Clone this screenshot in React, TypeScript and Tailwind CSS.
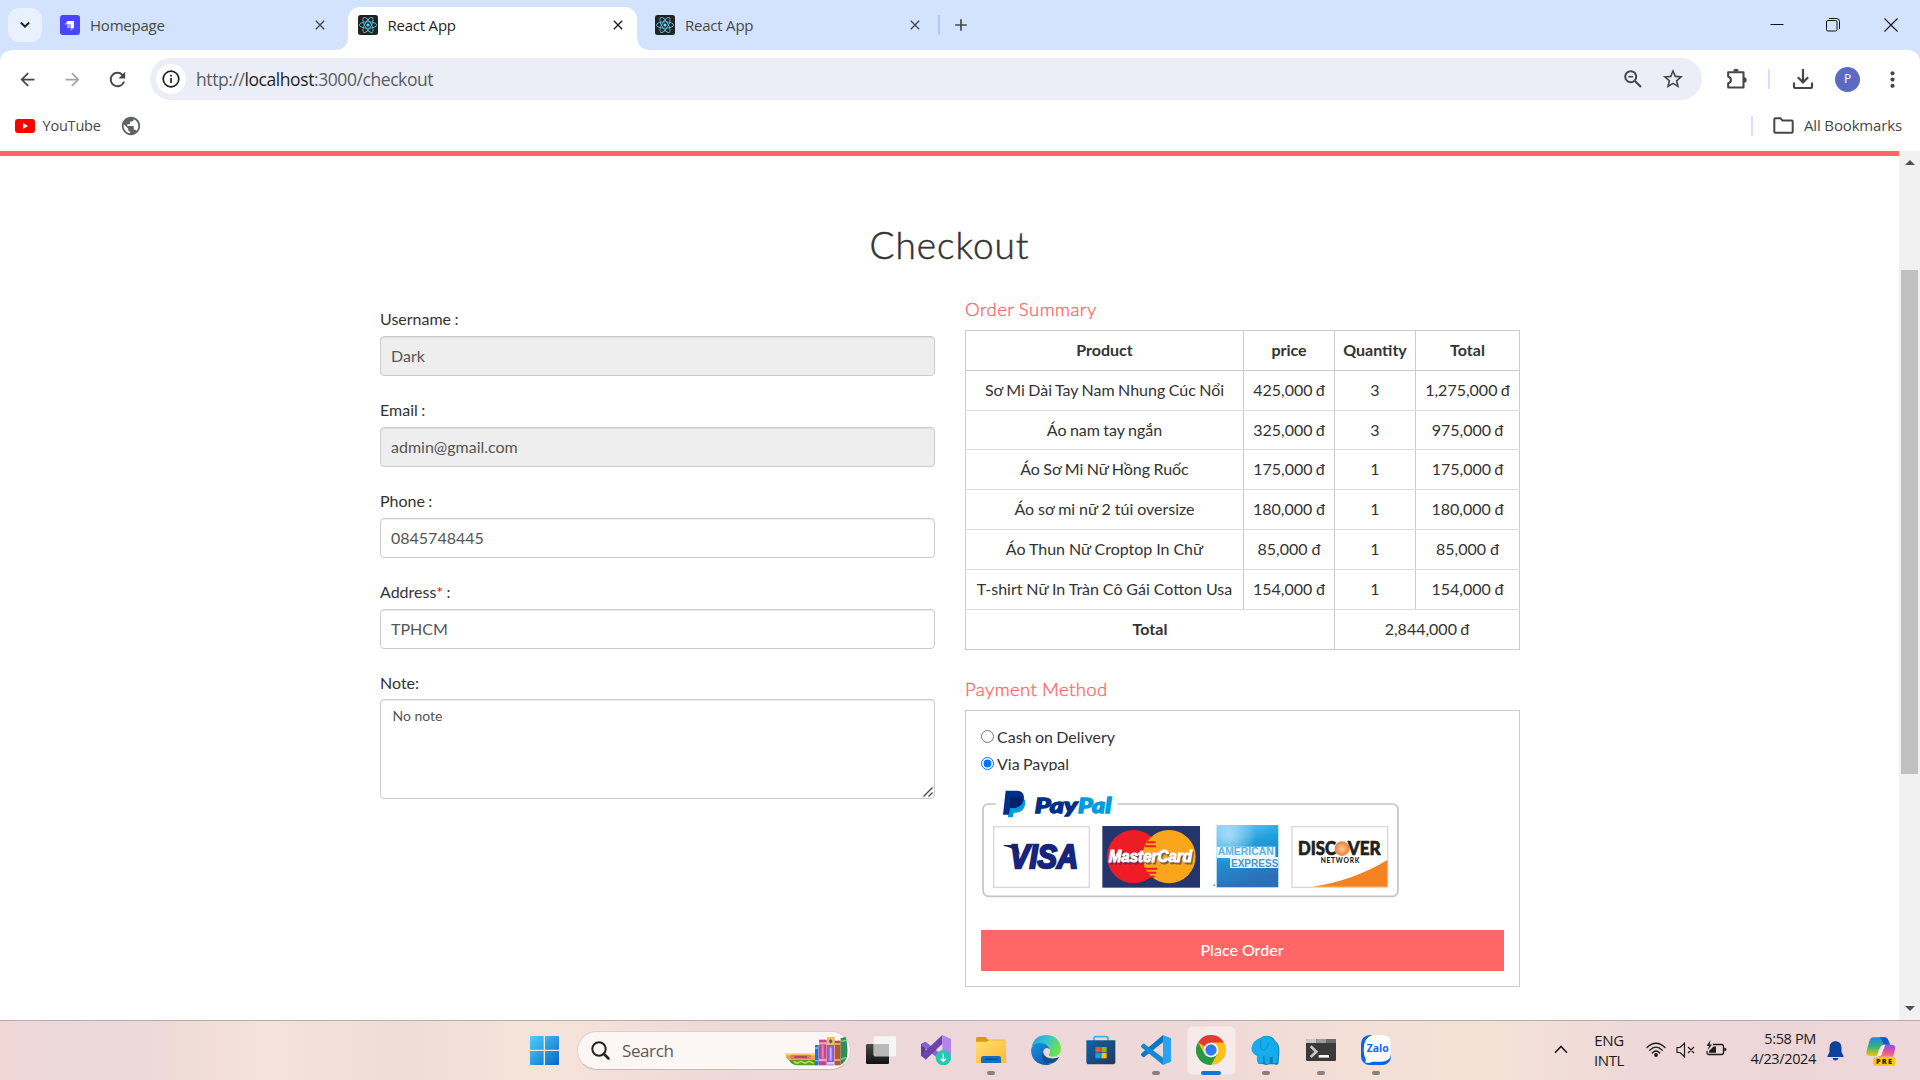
import React from "react";
import {
  MdArrowBack,
  MdArrowForward,
  MdRefresh,
  MdStarBorder,
  MdClose,
  MdAdd,
  MdPublic,
  MdMoreVert,
} from "react-icons/md";

const ui = "font-['Open_Sans','Noto_Sans',sans-serif]";
const body = "font-['Lato',sans-serif]";

const ReactLogo = () => (
  <svg className="h-5 w-5" viewBox="0 0 20 20">
    <rect width="20" height="20" rx="2.5" fill="#222" />
    <g fill="none" stroke="#61dafb" strokeWidth="0.9" opacity="0.85">
      <ellipse cx="10" cy="10" rx="8.6" ry="3.2" />
      <ellipse cx="10" cy="10" rx="8.6" ry="3.2" transform="rotate(60 10 10)" />
      <ellipse cx="10" cy="10" rx="8.6" ry="3.2" transform="rotate(120 10 10)" />
    </g>
    <circle cx="10" cy="10" r="1.6" fill="#61dafb" />
  </svg>
);

const StrapiLogo = () => (
  <svg className="h-5 w-5" viewBox="0 0 20 20">
    <rect width="20" height="20" rx="3" fill="#4945ff" />
    <path d="M7 6h6.500q.5 0 .5.5V13h-3.400V9.400H7z" fill="#fff" />
    <path d="M7 6v3.400H4.200z M10.600 13H14l-3.400 3z M7 9.400h3.600V13H7.500q-.5 0-.5-.5z" fill="#a5a2ff" />
  </svg>
);

function Tab({ icon, title, active }: { icon: React.ReactNode; title: string; active?: boolean }) {
  return (
    <div
      className={
        active
          ? "relative mt-[7px] flex h-[43px] w-[289px] items-start rounded-t-[12px] bg-white pt-2 pl-[10px]"
          : "relative mt-[7px] flex h-[43px] w-[289px] items-start pt-2 pl-[10px]"
      }
    >
      {active && (
        <>
          <svg className="absolute bottom-0 -left-[14px] h-[14px] w-[14px]" viewBox="0 0 14 14">
            <path d="M14 0v14H0Q14 14 14 0z" fill="#fff" />
          </svg>
          <svg className="absolute -right-[14px] bottom-0 h-[14px] w-[14px]" viewBox="0 0 14 14">
            <path d="M0 0v14h14Q0 14 0 0z" fill="#fff" />
          </svg>
        </>
      )}
      {icon}
      <span
        className={
          active
            ? "ml-[9.5px] text-[15px] leading-5 tracking-[-0.22px] text-[#1f1f1f]"
            : "ml-[10px] text-[15px] leading-5 tracking-[-0.22px] text-[#474747]"
        }
      >
        {title}
      </span>
      <MdClose className={active ? "mt-[2px] mr-[11px] ml-auto h-4 w-4 text-[#1f1f1f]" : "mt-[2px] mr-[11px] ml-auto h-4 w-4 text-[#474747]"} />
    </div>
  );
}

function TabStrip() {
  return (
    <div className="flex h-[50px] shrink-0 bg-[#d3e3fd]">
      <div className="mt-2 ml-2 flex h-[34px] w-[34px] items-center justify-center rounded-[11px] bg-[#e9f0fe]">
        <svg className="h-3 w-3" viewBox="0 0 12 12">
          <path d="M1.800 3.500L6 7.700l4.200-4.200" fill="none" stroke="#1f1f1f" strokeWidth="2" />
        </svg>
      </div>
      <div className="ml-2 flex">
        <Tab icon={<StrapiLogo />} title="Homepage" />
        <div className="w-[9px]" />
        <Tab icon={<ReactLogo />} title="React App" active />
        <div className="w-2" />
        <Tab icon={<ReactLogo />} title="React App" />
      </div>
      <div className="mt-[15px] ml-[4px] h-5 w-[2px] rounded bg-[#a8c7fa]" />
      <MdAdd className="mt-[15px] ml-[11px] h-5 w-5 text-[#474747]" />
      <div className="mt-[18px] ml-auto flex h-[14px] items-center">
        <svg className="mr-[42px] h-[14px] w-[14px]" viewBox="0 0 14 14">
          <path d="M0.500 6.500h13" stroke="#111" strokeWidth="1" />
        </svg>
        <svg className="mr-[44px] h-[14px] w-[14px]" viewBox="0 0 14 14">
          <rect x="0.500" y="2.500" width="10.500" height="10.500" rx="1.500" fill="none" stroke="#111" />
          <path d="M3 0.500h7.500q3 0 3 3V11" fill="none" stroke="#111" />
        </svg>
        <svg className="mr-[22px] h-[14px] w-[14px]" viewBox="0 0 14 14">
          <path d="M0.500 0.500l13 13M13.500 0.500l-13 13" stroke="#111" strokeWidth="1.100" />
        </svg>
      </div>
    </div>
  );
}

function Toolbar() {
  return (
    <div className="bg-[#d3e3fd]">
      <div className="flex h-[58px] items-center rounded-t-[12px] bg-white text-[#474747]">
        <MdArrowBack className="ml-[17px] h-[21px] w-[21px]" />
        <MdArrowForward className="ml-[24px] h-[21px] w-[21px] text-[#a6a6a6]" />
        <MdRefresh className="ml-[23px] h-[23px] w-[23px]" />
        <div className="ml-[21px] flex h-[42px] w-[1552px] items-center rounded-full bg-[#ebeef7]">
          <div className="ml-[6px] flex h-[30px] w-[30px] items-center justify-center rounded-full bg-white">
            <svg className="h-[18px] w-[18px]" viewBox="0 0 18 18">
              <circle cx="9" cy="9" r="7.800" fill="none" stroke="#1f1f1f" strokeWidth="1.700" />
              <path d="M9 8v5" stroke="#1f1f1f" strokeWidth="1.700" />
              <path d="M9 4.800v1.800" stroke="#1f1f1f" strokeWidth="1.700" />
            </svg>
          </div>
          <span className="ml-[10px] pt-[1px] text-[17.5px] tracking-[-0.42px] text-[#5a5d63]">
            http://<span className="text-[#1f1f1f]">localhost</span>:3000/checkout
          </span>
          <svg className="ml-auto h-[20px] w-[20px]" viewBox="0 0 20 20">
            <circle cx="7.700" cy="7.700" r="5.500" fill="none" stroke="#474747" strokeWidth="2" />
            <path d="M12 12l6 6" stroke="#474747" strokeWidth="2.200" />
            <path d="M5.300 7.700h4.800" stroke="#474747" strokeWidth="1.600" />
          </svg>
          <MdStarBorder className="mr-[17px] ml-[18px] h-6 w-6" />
        </div>
        <svg className="ml-[24px] h-[22px] w-[22px]" viewBox="0 0 22 22">
          <path
            d="M2.200 4.200H17.500V19.500H2.200V15.300Q4.900 14.400 4.900 11.900T2.200 8.500z"
            fill="none"
            stroke="#474747"
            strokeWidth="2.100"
            strokeLinejoin="round"
          />
          <path d="M7.300 3.500a2.700 2.700 0 0 1 5.400 0zM18 9.200a2.700 2.700 0 0 1 0 5.400z" fill="#474747" />
        </svg>
        <div className="ml-[20px] h-5 w-[2px] bg-[#d3e3fd]" />
        <svg className="ml-[22px] h-[22px] w-[22px]" viewBox="0 0 22 22">
          <path d="M11 1v13M5.800 9.200L11 14.400l5.200-5.200M2 14.500V19q0 1 1 1h16q1 0 1-1v-4.500" fill="none" stroke="#474747" strokeWidth="2.200" />
        </svg>
        <div className="ml-[21px] flex h-[25px] w-[25px] items-center justify-center rounded-full bg-[#5c6bc0] text-[12px] text-white">P</div>
        <MdMoreVert className="ml-[20px] h-[25px] w-[25px]" />
      </div>
      <div className="flex h-[43px] items-start bg-white pt-2 text-[#474747]">
        <svg className="mt-[3px] ml-[15px] h-[14px] w-5" viewBox="0 0 20 14">
          <rect width="20" height="14" rx="3" fill="#f00" />
          <path d="M8 4l5 3-5 3z" fill="#fff" />
        </svg>
        <span className="ml-[7.500px] w-[58.500px] text-[14.5px] leading-5 tracking-[-0.2px]">YouTube</span>
        <MdPublic className="-mt-px ml-[19px] h-[22px] w-[22px] text-[#5f6368]" />
        <div className="ml-auto h-5 w-[2px] bg-[#d3e3fd]" />
        <svg className="mt-[1px] ml-[20px] h-[18px] w-[21px]" viewBox="0 0 21 18">
          <path d="M1.300 2.300Q1.300 1.300 2.300 1.300H7.500L9.500 3.600H18.700Q19.700 3.600 19.700 4.600V14.700Q19.700 15.700 18.700 15.700H2.300Q1.300 15.700 1.300 14.700z" fill="none" stroke="#474747" strokeWidth="2" />
        </svg>
        <span className="-mt-px mr-[18px] ml-[10px] text-[15px] leading-5 tracking-[-0.15px]">All Bookmarks</span>
      </div>
    </div>
  );
}

function Field({ label, value, disabled, required }: { label: string; value: string; disabled?: boolean; required?: boolean }) {
  return (
    <div className="h-[91px]">
      <label className="block h-[31px] pt-[3px] text-[16px] leading-[22px]">
        {label}
        {required && <span className="text-[#f00]">*</span>} :
      </label>
      <input
        readOnly
        value={value}
        className={
          disabled
            ? "block h-10 w-full rounded-[4px] border border-[#ccc] bg-[#eee] px-[10px] pb-[1px] text-[16px] text-[#555] shadow-[inset_0_1px_1px_rgba(0,0,0,0.075)]"
            : "block h-10 w-full rounded-[4px] border border-[#ccc] bg-white px-[10px] pb-[1px] text-[16px] text-[#555] shadow-[inset_0_1px_1px_rgba(0,0,0,0.075)]"
        }
      />
    </div>
  );
}

const rows = [
  ["Sơ Mi Dài Tay Nam Nhung Cúc Nổi", "425,000 đ", "3", "1,275,000 đ"],
  ["Áo nam tay ngắn", "325,000 đ", "3", "975,000 đ"],
  ["Áo Sơ Mi Nữ Hồng Ruốc", "175,000 đ", "1", "175,000 đ"],
  ["Áo sơ mi nữ 2 túi oversize", "180,000 đ", "1", "180,000 đ"],
  ["Áo Thun Nữ Croptop In Chữ", "85,000 đ", "1", "85,000 đ"],
  ["T-shirt Nữ In Tràn Cô Gái Cotton Usa", "154,000 đ", "1", "154,000 đ"],
];

function OrderTable() {
  return (
    <table className="w-[554px] table-fixed border-collapse border border-[#ccc] text-center text-[16px] whitespace-nowrap">
      <colgroup>
        <col className="w-[278px]" />
        <col className="w-[91px]" />
        <col className="w-[81px]" />
        <col className="w-[104px]" />
      </colgroup>
      <tbody>
        <tr className="h-10">
          {["Product", "price", "Quantity", "Total"].map((h) => (
            <th key={h} className="border border-[#ccc] p-0 pb-[2px] font-bold">
              {h}
            </th>
          ))}
        </tr>
        {rows.map((r, i) => (
          <tr key={r[0]} className={i === 1 ? "h-[39px]" : i >= 3 ? "h-10 [word-spacing:-0.2px]" : "h-10"}>
            {r.map((c, j) => (
              <td key={j} className={i === 1 ? "border-x border-b border-x-[#ccc] border-b-[#ddd] p-0 pb-px" : "border-x border-b border-x-[#ccc] border-b-[#ddd] p-0 pb-[2px]"}>
                {c}
              </td>
            ))}
          </tr>
        ))}
        <tr className="h-10">
          <td colSpan={2} className="border border-[#ccc] p-0 pb-[2px] font-bold">
            Total
          </td>
          <td colSpan={2} className="border border-[#ccc] p-0 pb-[2px]">
            2,844,000 đ
          </td>
        </tr>
      </tbody>
    </table>
  );
}

const PaymentCards = () => (
  <svg className="-ml-[11px] block h-[130px] w-[440px]" viewBox="0 0 1320 390">
    <defs>
      <linearGradient id="amex" x1="0" y1="0" x2="0.300" y2="1">
        <stop offset="0" stopColor="#7fcaf2" />
        <stop offset="0.400" stopColor="#1fa0dc" />
        <stop offset="1" stopColor="#2a6fb8" />
      </linearGradient>
      <radialGradient id="amexGlow" cx="0.200" cy="0.150" r="0.450">
        <stop offset="0" stopColor="#a9dbf8" />
        <stop offset="1" stopColor="#a9dbf8" stopOpacity="0" />
      </radialGradient>
      <radialGradient id="disc">
        <stop offset="0" stopColor="#fcc9a0" />
        <stop offset="1" stopColor="#f07f2b" />
      </radialGradient>
    </defs>
    <path d="M77 72H56Q39 72 39 89V330Q39 349 58 349H1266Q1284 349 1284 330V89Q1284 72 1267 72H442" fill="none" stroke="#c4c4c4" strokeWidth="5" />
    <path d="M118 50H150Q170 54 165 76Q160 98 136 98H132L128 112H114z" fill="#009cde" />
    <path d="M107 32H142Q166 34 161 60Q156 84 128 84H121L116 104H99z" fill="#003087" />
    <path d="M121 52H158Q155 84 126 84H116z" fill="#012169" />
    <text x="194" y="99" fontFamily="Lato" fontWeight="900" fontStyle="italic" fontSize="64" textLength="128" lengthAdjust="spacingAndGlyphs" fill="#003087" stroke="#003087" strokeWidth="4">Pay</text>
    <text x="324" y="99" fontFamily="Lato" fontWeight="900" fontStyle="italic" fontSize="64" textLength="100" lengthAdjust="spacingAndGlyphs" fill="#009cde" stroke="#009cde" strokeWidth="4">Pal</text>

    <rect x="71" y="140" width="287" height="182" fill="#fff" stroke="#d9d9d9" strokeWidth="4" />
    <text x="120" y="265" fontFamily="Liberation Sans" fontWeight="700" fontStyle="italic" fontSize="98" textLength="204" lengthAdjust="spacingAndGlyphs" fill="#15267c" stroke="#15267c" strokeWidth="7">VISA</text>
    <path d="M101 195H142L150 224Q128 202 101 198z" fill="#1a1f5c" />

    <rect x="397" y="138" width="293" height="185" fill="#24346c" />
    <circle cx="491" cy="230" r="80" fill="#ee1c25" />
    <circle cx="597" cy="230" r="80" fill="#faa61a" />
    <path d="M530 187H556M524 199H558M524 266H562M524 278H558M530 290H554" stroke="#ee1c25" strokeWidth="6" />
    <text x="420" y="251" fontFamily="Liberation Sans" fontWeight="700" fontStyle="italic" fontSize="52" textLength="250" lengthAdjust="spacingAndGlyphs" fill="#24346c" stroke="#24346c" strokeWidth="3" opacity="0.6">MasterCard</text>
    <text x="416" y="247" fontFamily="Liberation Sans" fontWeight="700" fontStyle="italic" fontSize="52" textLength="250" lengthAdjust="spacingAndGlyphs" fill="#fff" stroke="#fff" strokeWidth="3">MasterCard</text>

    <rect x="740" y="135" width="185" height="187" fill="url(#amex)" />
    <rect x="740" y="135" width="185" height="187" fill="url(#amexGlow)" />
    <path d="M740 200H916V231H925V264H780V234H740z" fill="#eaf6fd" />
    <text x="743" y="226" fontFamily="Liberation Sans" fontWeight="700" fontSize="30" textLength="168" lengthAdjust="spacingAndGlyphs" fill="#5fb4e3">AMERICAN</text>
    <text x="783" y="261" fontFamily="Liberation Sans" fontWeight="700" fontSize="30" textLength="142" lengthAdjust="spacingAndGlyphs" fill="#4a96d0">EXPRESS</text>
    <circle cx="733" cy="316" r="3" fill="#5fa8d8" />

    <rect x="966" y="140" width="287" height="182" fill="#fff" stroke="#d9d9d9" strokeWidth="4" />
    <path d="M1028 320Q1150 302 1252 240V320z" fill="#f58220" />
    <text x="984" y="226" fontFamily="Lato" fontWeight="900" fontSize="58" textLength="114" lengthAdjust="spacingAndGlyphs" fill="#231f20" stroke="#231f20" strokeWidth="2">DISC</text>
    <circle cx="1116" cy="206" r="22" fill="url(#disc)" />
    <text x="1133" y="226" fontFamily="Lato" fontWeight="900" fontSize="58" textLength="99" lengthAdjust="spacingAndGlyphs" fill="#231f20" stroke="#231f20" strokeWidth="2">VER</text>
    <text x="1052" y="250" fontFamily="Lato" fontWeight="900" fontSize="20" textLength="116" fill="#231f20">NETWORK</text>
  </svg>
);

function Checkout() {
  return (
    <div className="flex min-h-0 flex-1">
      <main className={`${body} flex-1 overflow-hidden border-t-[5px] border-[#f66] bg-white text-[#333] [word-spacing:-0.7px]`}>
        <h1 className="mt-[61px] h-[56px] text-center text-[37px] leading-[55px] font-light tracking-[0.95px] [-webkit-text-stroke:0.5px_#333]">Checkout</h1>
        <div className="ml-[380px] flex w-[1140px] justify-between">
          <form className="mt-[32px] w-[555px]">
            <Field label="Username" value="Dark" disabled />
            <Field label="Email" value="admin@gmail.com" disabled />
            <Field label="Phone" value="0845748445" />
            <Field label="Address" value="TPHCM" required />
            <label className="block h-[30px] pt-[3px] text-[16px] leading-[22px]">Note:</label>
            <div className="relative h-[100px]">
              <textarea
                readOnly
                value="No note"
                className="block h-[100px] w-full resize-none rounded-[4px] border border-[#ccc] px-[11.5px] py-[6px] text-[14px] leading-5 text-[#555] shadow-[inset_0_1px_1px_rgba(0,0,0,0.075)]"
              />
              <svg className="absolute right-[2px] bottom-[2px] h-[10px] w-[10px]" viewBox="0 0 10 10">
                <path d="M0.500 9.500l9-9M5.500 9.500l4-4" stroke="#444" strokeWidth="1.300" />
              </svg>
            </div>
          </form>
          <section className="mt-[24px] w-[555px]">
            <h2 className="-mt-[1px] h-[34px] text-[18.5px] leading-[27px] font-light tracking-[0.5px] text-[#f66] [-webkit-text-stroke:0.35px_#f66]">Order Summary</h2>
            <OrderTable />
            <h2 className="mt-[26px] h-[34px] text-[18.5px] leading-[27px] font-light tracking-[0.42px] text-[#f66] [-webkit-text-stroke:0.35px_#f66]">Payment Method</h2>
            <div className="h-[277px] border border-[#ccc] px-[15px]">
              <label className="mt-[12px] flex h-[27px] items-center text-[16px]">
                <input type="radio" name="pay" readOnly className="mr-[3px] h-[13px] w-[13px]" />
                Cash on Delivery
              </label>
              <label className="mt-[2px] flex h-[19px] items-start overflow-hidden text-[16px] leading-[24px]">
                <input type="radio" name="pay" readOnly checked className="mt-[5px] mr-[3px] h-[13px] w-[13px]" />
                Via Paypal
              </label>
              <div className="mt-[9px] h-[150px]">
                <PaymentCards />
              </div>
              <button className="block h-[41px] w-full bg-[#f66] pr-px pb-[2px] text-[16px] font-medium text-white">Place Order</button>
            </div>
          </section>
        </div>
      </main>
      <div className="flex w-[21px] flex-col items-center bg-[#f1f1f1]">
        <svg className="mt-[9px] h-[5px] w-[10px]" viewBox="0 0 10 5">
          <path d="M0 5L5 0l5 5z" fill="#505050" />
        </svg>
        <div className="mt-[105px] h-[504px] w-[17px] bg-[#c1c1c1]" />
        <svg className="mt-auto mb-[9px] h-[5px] w-[10px]" viewBox="0 0 10 5">
          <path d="M0 0l5 5 5-5z" fill="#505050" />
        </svg>
      </div>
    </div>
  );
}

function TaskIcon({ children, state }: { children: React.ReactNode; state?: "open" | "active" }) {
  return (
    <div className="relative flex h-[60px] w-[55px] items-center justify-center">
      {state === "active" && <div className="absolute top-[5px] left-[3px] h-[49px] w-[49px] rounded-[5px] border border-[#f0e4e4] bg-[#f7eaea]" />}
      <svg className="relative -mt-[3px] h-[30px] w-[30px]" viewBox="0 0 90 90">
        {children}
      </svg>
      {state === "open" && <div className="absolute bottom-[6px] left-[23px] h-1 w-2 rounded-full bg-[#8a8080]" />}
      {state === "active" && <div className="absolute bottom-[6px] left-[17px] h-1 w-5 rounded-full bg-[#0a78d4]" />}
    </div>
  );
}

function Taskbar() {
  return (
    <div
      className={`${ui} flex h-[60px] shrink-0 border-t border-[#b9abab] bg-[linear-gradient(90deg,#f0d7d6_0%,#ecd8d9_3%,#eed9d9_8%,#f1ddd7_10%,#f5e3da_14%,#f0dcd7_21%,#f5e3d9_27%,#f4e1d9_31%,#f0dad8_36%,#edd7d9_45%,#efd8d8_62%,#f3dfd6_70%,#f4e2d7_78%,#efd9d8_85%,#ecd6d8_93%,#efd8d8_100%)]`}
    >
      <svg className="mt-[15px] ml-[530px] h-[29px] w-[29px]" viewBox="0 0 87 87">
        <defs>
          <linearGradient id="win" x1="0" y1="0" x2="1" y2="1">
            <stop offset="0" stopColor="#4fd0fb" />
            <stop offset="1" stopColor="#0568c8" />
          </linearGradient>
        </defs>
        <path d="M3 0H41V41H0V3Q0 0 3 0zM45 0H84Q87 0 87 3V41H45zM0 45H41V87H3Q0 87 0 84zM45 45H87V84Q87 87 84 87H45z" fill="url(#win)" />
      </svg>
      <div className="mt-[10px] ml-[18px] flex h-[39px] w-[274px] items-center rounded-full border border-[#e2cfcb] border-b-[#c9b9b6] bg-[#fcf7f5]">
        <svg className="ml-[13px] h-[19px] w-[19px]" viewBox="0 0 19 19">
          <circle cx="8" cy="8" r="6.700" fill="none" stroke="#222" strokeWidth="2" />
          <path d="M13 13l4.500 4.500" stroke="#222" strokeWidth="2.500" strokeLinecap="round" />
        </svg>
        <span className="ml-[12px] text-[17px] tracking-[-0.4px] text-[#5d5856]">Search</span>
        <svg className="mr-[2px] ml-auto h-[30px] w-[63px]" viewBox="0 0 189 90">
          <path d="M2 53H92V72H12Q2 70 2 53z" fill="#e9a93c" />
          <rect x="2" y="53" width="90" height="5" fill="#f5d36b" />
          <rect x="16" y="56" width="62" height="13" rx="5" fill="#e8727a" />
          <rect x="28" y="60" width="38" height="6" fill="#a95058" />
          <path d="M12 72H92V88H36Q18 86 12 72z" fill="#5a9e22" />
          <path d="M26 76l10 6 12-6 12 6 12-6 14 6" fill="none" stroke="#b8e04e" strokeWidth="5" />
          <rect x="90" y="27" width="11" height="61" fill="#2f6fdb" />
          <path d="M90 36h11M90 74h11" stroke="#82b4ff" strokeWidth="4" />
          <rect x="102" y="11" width="23" height="77" fill="#c4498c" />
          <path d="M102 22h23M102 72h23" stroke="#f3a0c4" strokeWidth="7" />
          <path d="M113 28v38" stroke="#e884b4" strokeWidth="6" />
          <rect x="126" y="3" width="22" height="85" fill="#8a62cf" />
          <rect x="126" y="3" width="22" height="24" fill="#f0c341" />
          <path d="M137 9l6 7-6 7-6-7z" fill="#6d43b4" />
          <path d="M137 34v40" stroke="#c9b2f2" strokeWidth="6" />
          <rect x="126" y="78" width="22" height="8" fill="#d9c7f5" />
          <rect x="149" y="14" width="18" height="74" fill="#b1592c" />
          <path d="M149 24h18M149 72h18" stroke="#e9a25d" strokeWidth="6" />
          <path d="M167 6L182 3Q190 30 186 62Q180 80 167 86z" fill="#2f8f55" />
          <path d="M168 16l16-3M168 70l15-6" stroke="#7fd19a" strokeWidth="4" />
        </svg>
      </div>
      <div className="ml-[2.5px] flex">
        <TaskIcon>
          <defs>
            <linearGradient id="tv" x1="0" y1="0" x2="0" y2="1">
              <stop offset="0" stopColor="#4a4a48" />
              <stop offset="1" stopColor="#111" />
            </linearGradient>
          </defs>
          <rect x="0" y="27" width="69" height="60" rx="4" fill="url(#tv)" />
          <rect x="23" y="4" width="67" height="60" rx="4" fill="#f6f6f6" />
          <path d="M23 27H69V64H27Q23 64 23 60z" fill="#b9b9b9" />
        </TaskIcon>
        <TaskIcon>
          <path d="M0 27L14 20V70L0 63z" fill="#5b3f98" />
          <path d="M14 20L66 62V82L0 30z" fill="#8b62cc" />
          <path d="M0 60L64 0V26L14 74z" fill="#6a45ad" />
          <path d="M64 0L90 12V74L64 84z" fill="#b583f0" />
          <circle cx="67" cy="68" r="23" fill="#24c8b4" />
          <path d="M67 56v22M59 71l8 8 8-8" fill="none" stroke="#fff" strokeWidth="4" />
        </TaskIcon>
        <TaskIcon state="open">
          <defs>
            <linearGradient id="fold" x1="0" y1="0" x2="1" y2="1">
              <stop offset="0" stopColor="#ffdf77" />
              <stop offset="1" stopColor="#fdba2c" />
            </linearGradient>
          </defs>
          <path d="M0 10Q0 6 4 6H28Q32 6 36 14H86Q90 14 90 18V40H0z" fill="#dd9a0a" />
          <path d="M0 20H32L40 16H90V84H0z" fill="url(#fold)" />
          <path d="M15 84V70Q15 63 22 63H68Q75 63 75 70V84z" fill="#1170c4" />
          <path d="M27 73H64" stroke="#0a4a88" strokeWidth="4" />
        </TaskIcon>
        <TaskIcon>
          <defs>
            <linearGradient id="eg1" x1="0" y1="0" x2="1" y2="0.400">
              <stop offset="0" stopColor="#1c9de0" />
              <stop offset="0.500" stopColor="#35c3d0" />
              <stop offset="1" stopColor="#6ee04e" />
            </linearGradient>
            <linearGradient id="eg2" x1="0" y1="0" x2="0.600" y2="1">
              <stop offset="0" stopColor="#1795e0" />
              <stop offset="1" stopColor="#0b5cb4" />
            </linearGradient>
          </defs>
          <path d="M2 36Q10 0 46 0Q84 2 90 38Q90 64 66 65Q52 65 53 58Q60 50 55 42Q46 24 24 28Q8 32 2 36z" fill="url(#eg1)" />
          <path d="M0 48Q2 24 28 24Q48 24 56 42Q44 34 38 46Q30 62 44 80Q50 87 60 87Q50 91 42 90Q4 86 0 48z" fill="url(#eg2)" />
          <path d="M38 44Q26 68 46 86Q72 90 85 66Q80 68 70 70Q40 72 36 50z" fill="#114f8c" />
        </TaskIcon>
        <TaskIcon>
          <defs>
            <linearGradient id="st" x1="0" y1="0" x2="1" y2="1">
              <stop offset="0" stopColor="#0a63a8" />
              <stop offset="1" stopColor="#25365f" />
            </linearGradient>
          </defs>
          <path d="M24 20V10Q24 5 29 5H61Q66 5 66 10V20" fill="none" stroke="#35b7ea" strokeWidth="5" />
          <path d="M1 16H88V80Q88 88 80 88H9Q1 88 1 80z" fill="url(#st)" />
          <rect x="28" y="36" width="16" height="16" fill="#f35325" />
          <rect x="46" y="36" width="16" height="16" fill="#81bc06" />
          <rect x="28" y="54" width="16" height="16" fill="#05a6f0" />
          <rect x="46" y="54" width="16" height="16" fill="#ffba08" />
        </TaskIcon>
        <TaskIcon state="open">
          <path d="M0 56L66 0V22L10 66Q8 68 5 65L0 60z" fill="#0b78c2" />
          <path d="M0 32L6 26Q8 25 10 26L66 68V90L0 36z" fill="#1488d4" />
          <path d="M66 0L90 10V80L66 90z" fill="#2aa3f0" />
        </TaskIcon>
        <TaskIcon state="active">
          <circle cx="45" cy="45" r="45" fill="#fbc116" />
          <path d="M45 45L6 22.500A45 45 0 0 1 84 22.500H45z" fill="#e33b2e" />
          <path d="M64.500 56.300L45 90A45 45 0 0 1 6 22.500L25.500 56.300L45 67z" fill="#279847" />
          <circle cx="45" cy="45" r="22" fill="#fff" />
          <circle cx="45" cy="45" r="17" fill="#2f7cf0" />
        </TaskIcon>
        <TaskIcon state="open">
          <path d="M30 8Q44 -2 62 6Q70 10 72 18Q86 26 85 50Q84 70 82 86Q76 92 70 88L54 88Q46 92 38 88L22 86Q16 74 20 64Q4 56 4 40Q8 16 30 8z" fill="#0d7fae" />
          <path d="M26 10Q40 -1 58 5Q66 9 68 17Q82 25 82 47Q82 66 78 83Q71 88 65 83V64Q60 68 56 66V84Q48 90 42 85L40 62L36 64V84Q26 90 19 80Q16 70 19 61Q2 58 1 40Q6 16 26 10z" fill="#14acec" />
          <path d="M30 14Q24 40 36 46Q50 44 52 24" fill="none" stroke="#0f90c8" strokeWidth="3" />
        </TaskIcon>
        <TaskIcon state="open">
          <rect x="0" y="12" width="90" height="66" rx="4" fill="#3a3a3a" />
          <path d="M0 24V16Q0 12 4 12H31V24z" fill="#c9c9c9" />
          <path d="M31 12H60V24H31z" fill="#9a9a9a" />
          <path d="M60 12H86Q90 12 90 16V24H60z" fill="#6b6b6b" />
          <path d="M14 34L31 50L14 66" fill="none" stroke="#c8c8c8" strokeWidth="8" />
          <path d="M38 64H69" stroke="#f4f4f4" strokeWidth="8" />
        </TaskIcon>
        <TaskIcon state="open">
          <rect x="0" y="0" width="90" height="90" rx="26" fill="#0a63f0" />
          <path d="M34 0H66Q90 0 90 26V54Q90 80 62 80H34Q22 86 12 82Q16 78 14 72Q8 62 8 44Q8 8 34 0z" fill="#fff" />
          <text x="17" y="51" fontFamily="Open Sans" fontWeight="700" fontSize="31" textLength="66" lengthAdjust="spacingAndGlyphs" fill="#0a68ff">Zalo</text>
        </TaskIcon>
      </div>
      <svg className="mt-[24px] ml-[150.5px] h-[9px] w-[14px]" viewBox="0 0 14 9">
        <path d="M1 7.800L7 1.500l6 6.300" fill="none" stroke="#1c1c1c" strokeWidth="1.600" />
      </svg>
      <div className="mt-[9px] ml-[25px] w-[32px] text-center text-[15px] leading-5 tracking-[-0.4px] text-[#1c1c1c]">
        <div>ENG</div>
        <div>INTL</div>
      </div>
      <svg className="mt-[20px] ml-[21px] h-[18px] w-[20px]" viewBox="0 0 20 18">
        <g fill="none" stroke="#1c1c1c" strokeWidth="1.300" strokeLinecap="round">
          <path d="M1 6.500Q10 -2 19 6.500" />
          <path d="M3.700 9.300Q10 3 16.300 9.300" />
          <path d="M6.300 12Q10 8 13.700 12" />
        </g>
        <circle cx="10" cy="14" r="1.900" fill="#1c1c1c" />
      </svg>
      <svg className="mt-[21px] ml-[10px] h-[16px] w-[19px]" viewBox="0 0 19 16">
        <path d="M1 5.500H4L8.500 1.200V14.800L4 10.500H1zM12 5l6 6M18 5l-6 6" fill="none" stroke="#1c1c1c" strokeWidth="1.200" />
      </svg>
      <svg className="mt-[19px] ml-[11px] h-[18px] w-[21px]" viewBox="0 0 21 18">
        <path d="M7 4.500H15.500Q17.500 4.500 17.500 6.500V12.500Q17.500 14.500 15.500 14.500H3Q1 14.500 1 12.500V11" fill="none" stroke="#1c1c1c" strokeWidth="1.300" />
        <path d="M3 12.800V11L7.500 6.500H10V12.800zM18.300 7.500L20.300 8.500V10.500L18.300 11.500zM4.500 0L0.500 6H3L1.500 10.500L6 4.500H3.600z" fill="#1c1c1c" />
      </svg>
      <div className="mt-[8px] ml-auto w-[80px] text-right text-[14.5px] leading-5 tracking-[-0.35px] text-[#1c1c1c]">
        <div>5:58 PM</div>
        <div>4/23/2024</div>
      </div>
      <svg className="mt-[20px] ml-[11px] h-[20px] w-[17px]" viewBox="0 0 17 20">
        <path d="M8.500 0Q14.500 0.500 14.500 7V11L16.500 15V16H0.500V15L2.500 11V7Q2.500 0.500 8.500 0zM5.500 17H11.500Q10.800 19.500 8.500 19.500T5.500 17z" fill="#0a429c" />
      </svg>
      <svg className="mt-[15px] mr-[24px] ml-[22px] h-[30px] w-[30px]" viewBox="0 0 90 90">
        <defs>
          <linearGradient id="cp1" x1="0" y1="0" x2="0" y2="1">
            <stop offset="0" stopColor="#1a8be8" />
            <stop offset="0.500" stopColor="#36b27c" />
            <stop offset="1" stopColor="#f2c511" />
          </linearGradient>
          <linearGradient id="cp2" x1="0.500" y1="0" x2="0.300" y2="1">
            <stop offset="0" stopColor="#9a50e8" />
            <stop offset="0.500" stopColor="#e14fa8" />
            <stop offset="1" stopColor="#fb8450" />
          </linearGradient>
        </defs>
        <path d="M22 4H56Q64 4 68 16L72 26H52Q44 28 40 38L32 60H8Q-2 58 2 44L10 16Q13 4 22 4z" fill="url(#cp1)" />
        <path d="M40 4H56Q64 4 68 16L72 26H52Q48 8 40 4z" fill="#1c56c8" />
        <path d="M56 26H78Q90 27 87 40L82 62H36L46 56Z" fill="url(#cp2)" />
        <path d="M52 26H58L44 60H34z" fill="#f6eef4" />
        <rect x="21" y="63" width="67" height="26" rx="6" fill="#fcc419" />
        <text x="30" y="84" fontFamily="Open Sans" fontWeight="800" fontSize="22" textLength="48" fill="#222">PRE</text>
      </svg>
    </div>
  );
}

export default function App() {
  return (
    <div className={`${ui} flex h-[1080px] w-[1920px] flex-col overflow-hidden bg-white`}>
      <TabStrip />
      <Toolbar />
      <Checkout />
      <Taskbar />
    </div>
  );
}
